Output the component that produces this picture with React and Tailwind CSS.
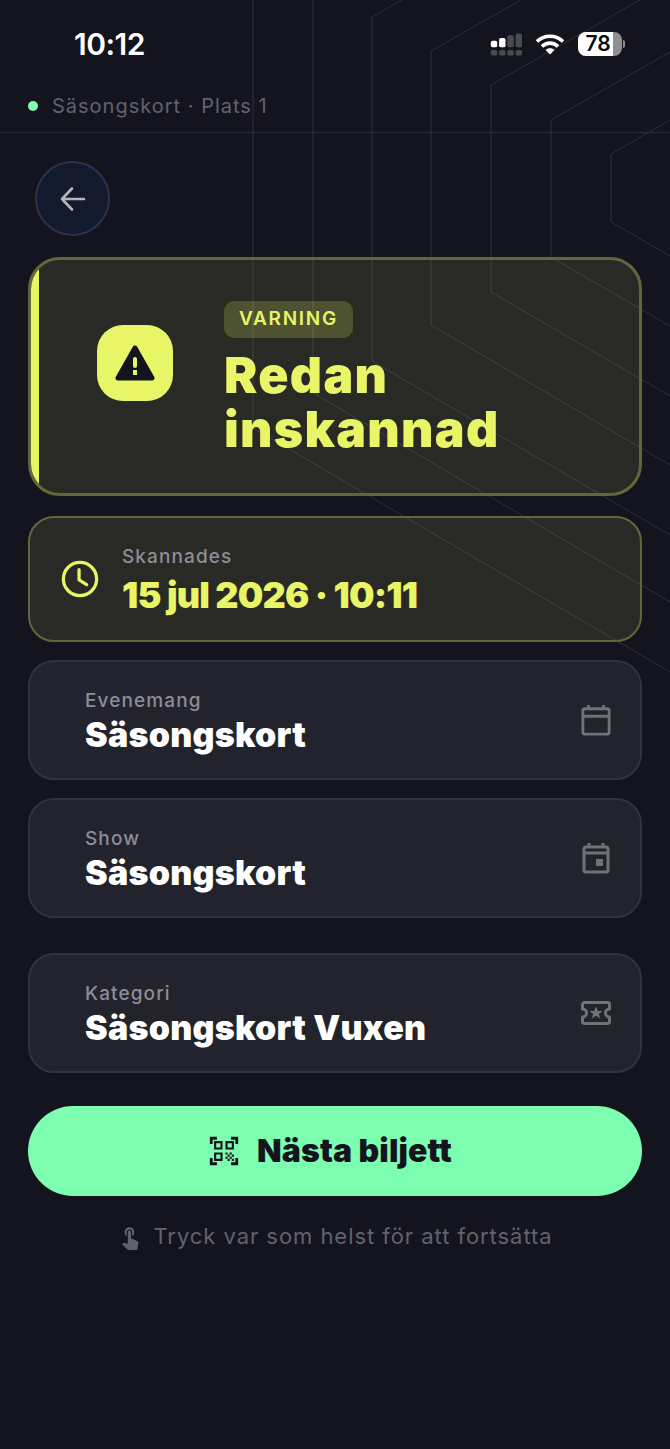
import { MdQrCodeScanner, MdTouchApp } from 'react-icons/md'

const LINES = [
  'M253 0V428L670 672',
  'M313 0V393L670 602',
  'M402 0L372 17V361L670 535',
  'M521 0L431 51V325L670 465',
  'M640 0L491 85V292L670 396',
  'M670 52L551 120V257L670 326',
  'M670 120L611 154V222L670 256',
]

function Background() {
  return (
    <svg className="absolute inset-0 w-full h-full pointer-events-none" viewBox="0 0 670 1449" fill="none">
      {LINES.map(d => <path key={d} d={d} stroke="#2e2e3d" strokeWidth="1" />)}
    </svg>
  )
}

function StatusBar() {
  return (
    <div className="h-[88px] pl-[74px] pr-[45px] flex items-center justify-between">
      <span className="text-[30px] font-semibold text-white tracking-[-0.5px]">10:12</span>
      <div className="flex items-center">
        <svg width="33" height="23" viewBox="0 0 36 24" className="mr-[13px]">
          <rect x="2" y="8" width="7" height="7" rx="2" fill="#fff" />
          <rect x="11" y="5" width="7" height="10" rx="2" fill="#fff" />
          <rect x="20" y="2" width="7" height="13" rx="2" fill="#4a4a52" />
          <rect x="29" y="0" width="7" height="15" rx="2" fill="#4a4a52" />
          {[2, 11, 20, 29].map(x => <rect key={x} x={x} y="18" width="7" height="6" rx="2" fill="#4a4a52" />)}
        </svg>
        <svg width="30" height="22" viewBox="0 0 30 22" className="mr-[13px]" fill="none" stroke="#fff" strokeWidth="3.6">
          <path d="M2 8.500C9 1.500 21 1.500 28 8.500" />
          <path d="M7 13.500C11.500 9 18.500 9 23 13.500" />
          <path d="M15 21.500L10.500 17C13 14.800 17 14.800 19.500 17Z" fill="#fff" stroke="none" />
        </svg>
        <div className="flex items-center">
          <div className="w-[44px] h-[24px] rounded-[8px] overflow-hidden flex bg-[#8e8e93] relative">
            <div className="w-[35px] bg-white" />
            <span className="absolute inset-0 pr-[4px] flex items-center justify-center text-[21px] font-semibold text-[#0b0b10]">78</span>
          </div>
          <div className="w-[2px] h-[8px] ml-[1px] rounded-r bg-[#8e8e93]" />
        </div>
      </div>
    </div>
  )
}

function CalendarIcon() {
  return (
    <svg width="30" height="32" viewBox="0 0 32 34" fill="none" stroke="#71717a" strokeWidth="3" strokeLinejoin="round">
      <rect x="2" y="5" width="28" height="27" rx="2" />
      <path d="M2 13H30M8 1V5M24 1V5" />
    </svg>
  )
}

function EventIcon() {
  return (
    <svg width="28" height="32" viewBox="0 0 28 32" fill="none" stroke="#71717a" strokeWidth="3" strokeLinejoin="round">
      <rect x="2" y="5" width="24" height="25" rx="2" />
      <path d="M2 11H26M7 1V5M21 1V5" />
      <rect x="14" y="17" width="7" height="7" fill="#71717a" stroke="none" />
    </svg>
  )
}

function TicketIcon() {
  return (
    <svg width="30" height="24" viewBox="0 0 30 24" fill="none" stroke="#71717a" strokeWidth="3" strokeLinejoin="round">
      <path d="M3.500 1.500H26.500a2 2 0 0 1 2 2V8a4 4 0 0 0 0 8v4.500a2 2 0 0 1-2 2H3.500a2 2 0 0 1-2-2V16a4 4 0 0 0 0-8V3.500a2 2 0 0 1 2-2Z" />
      <path d="M15 5.500L16.900 10H21.500L17.800 12.900L19.200 17.500L15 14.800L10.800 17.500L12.200 12.900L8.500 10H13.100Z" fill="#71717a" stroke="none" />
    </svg>
  )
}

function InfoCard({ label, value, icon, className }) {
  return (
    <div className={`relative h-[120px] rounded-[26px] border-2 border-[#32323f] bg-[#23232e] pl-[55px] pr-[28px] pt-[6px] flex items-center justify-between ${className}`}>
      <div>
        <div className="text-[19px] leading-[22px] font-medium tracking-[1.1px] text-[#8d8d96]">{label}</div>
        <div className="mt-[2px] text-[34px] leading-[42px] font-black text-white tracking-[0.25px]">{value}</div>
      </div>
      <div className="w-[32px] -mt-[6px] flex justify-center">{icon}</div>
    </div>
  )
}

export default function App() {
  return (
    <div className="relative w-[670px] min-h-[1449px] bg-[#14141f] overflow-hidden font-['Inter',sans-serif]">
      <Background />
      <div className="relative">
        <StatusBar />
        <div className="h-[45px] pb-[8px] pl-[28px] flex items-center gap-[14px] border-b border-[#2a2a38]">
          <span className="w-[10px] h-[10px] rounded-full bg-[#7dfdb0]" />
          <span className="text-[20px] tracking-[1px] text-[#62626c]">Säsongskort · Plats 1</span>
        </div>

        <main className="px-[28px] pt-[28px]">
          <button className="ml-[7px] w-[75px] h-[75px] rounded-full border-2 border-[#2d3150] bg-[#141a2e] flex items-center justify-center">
            <svg width="28" height="28" viewBox="0 0 28 28" fill="none" stroke="#b5b5ba" strokeWidth="2.6" strokeLinecap="round" strokeLinejoin="round">
              <path d="M25 14H3M13 3.500L3 14L13 24.500" />
            </svg>
          </button>

          <div className="mt-[21px] h-[239px] rounded-[32px] border-[3px] border-[#63663b] bg-[#e8f566]/10 overflow-hidden flex items-center">
            <div className="w-[8px] h-full bg-[#e8f566] shrink-0" />
            <div className="ml-[58px] w-[76px] h-[76px] rounded-[26px] bg-[#e8f566] flex items-center justify-center shrink-0 -mt-[28px]">
              <svg width="40" height="36" viewBox="0 0 40 36">
                <path d="M20 3L37 33H3Z" fill="#14141f" stroke="#14141f" strokeWidth="5" strokeLinejoin="round" />
                <rect x="18" y="12" width="4" height="11" rx="2" fill="#e8f566" />
                <rect x="18" y="25" width="4" height="5" fill="#e8f566" />
              </svg>
            </div>
            <div className="ml-[51px] pt-[4px]">
              <span className="inline-flex items-center h-[37px] px-[15px] rounded-[10px] bg-[#e8f566]/20 text-[19px] font-semibold tracking-[1.7px] text-[#e8f566]">VARNING</span>
              <h1 className="mt-[10px] text-[50px] leading-[54px] font-black tracking-[1.3px] text-[#e8f566]">Redan<br />inskannad</h1>
            </div>
          </div>

          <div className="mt-[20px] h-[126px] rounded-[26px] border-2 border-[#63663b] bg-[#e8f566]/10 pl-[31px] flex items-center">
            <svg width="38" height="38" viewBox="0 0 40 40" fill="none" stroke="#e8f566" strokeWidth="3.400" strokeLinecap="round" strokeLinejoin="round">
              <circle cx="20" cy="20" r="17.500" />
              <path d="M19 10V21L27 26" />
            </svg>
            <div className="ml-[23px] pt-[5px]">
              <div className="text-[19px] leading-[22px] font-medium tracking-[1.1px] text-[#8d8d96]">Skannades</div>
              <div className="mt-[5px] text-[36px] leading-[44px] font-black text-[#e8f566] tracking-[-0.85px]">15 jul 2026 · 10:11</div>
            </div>
          </div>

          <InfoCard className="mt-[18px]" label="Evenemang" value="Säsongskort" icon={<CalendarIcon />} />
          <InfoCard className="mt-[18px]" label="Show" value="Säsongskort" icon={<EventIcon />} />
          <InfoCard className="mt-[35px]" label="Kategori" value="Säsongskort Vuxen" icon={<TicketIcon />} />

          <button className="mt-[33px] w-full h-[90px] pr-[11px] rounded-full bg-[#7dfdb0] flex items-center justify-center gap-[16px] text-[#14141f]">
            <MdQrCodeScanner size={34} />
            <span className="text-[32px] font-black tracking-[0.1px]">Nästa biljett</span>
          </button>

          <div className="mt-[24px] flex items-center justify-center gap-[10px] text-[#62626c]">
            <MdTouchApp size={26} />
            <span className="text-[22px] tracking-[0.95px]">Tryck var som helst för att fortsätta</span>
          </div>
        </main>
      </div>
    </div>
  )
}
